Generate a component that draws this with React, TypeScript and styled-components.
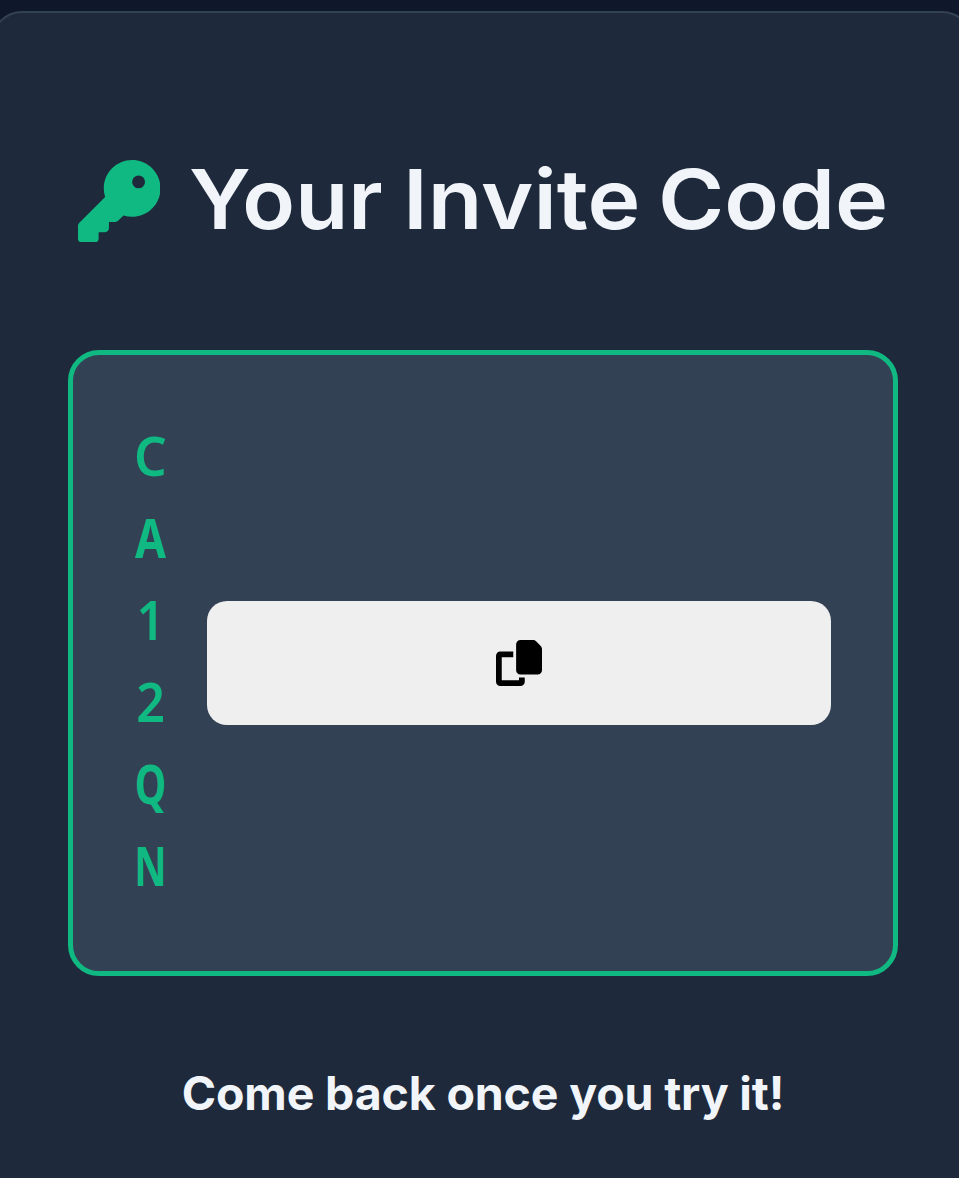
import React from 'react';
import styled, { createGlobalStyle } from 'styled-components';
import { FaKey } from 'react-icons/fa6';

const GlobalStyle = createGlobalStyle`
  * { box-sizing: border-box; }
  body {
    margin: 0;
    overflow-x: hidden;
    background: #0f172a;
    font-family: Inter, sans-serif;
  }
`;

const Page = styled.div`
  height: 1178px;
  padding-top: 11px;
  overflow: hidden;
`;

const Card = styled.main`
  margin: 0 -14px 0 -9px;
  height: 1167px;
  padding: 133px 68px 0 75px;
  background: #1e293b;
  border: 2px solid #334155;
  border-bottom: 0;
  border-radius: 31px 31px 0 0;
`;

const Title = styled.h1`
  display: flex;
  align-items: center;
  height: 110px;
  margin: 0;
  color: #f1f5f9;
  font-size: 83px;
  font-weight: 640;
  line-height: 110px;
  white-space: nowrap;
`;

const KeyIcon = styled(FaKey)`
  width: 82.5px;
  height: 82.5px;
  margin: 0 29.3px 0 9.6px;
  flex: none;
  color: #10b981;
`;

const Word = styled.span<{ $width: number; $stretch: number }>`
  flex: none;
  width: ${(p) => p.$width}px;
  margin-top: -4px;
  transform: scaleX(${(p) => p.$stretch});
  transform-origin: left center;
`;

const CodeBox = styled.section`
  display: flex;
  align-items: center;
  gap: 40px;
  width: 830px;
  height: 626px;
  margin-top: 94px;
  padding: 0 62px 0 61px;
  background: #334155;
  border: 5px solid #10b981;
  border-radius: 31px;
`;

const Code = styled.div`
  display: flex;
  flex-direction: column;
  width: 33px;
  margin-top: -7px;
  color: #10b981;
  font-family: 'Noto Sans', sans-serif;
  font-size: 54.6px;
  line-height: 82px;
`;

const Letter = styled.span<{ $scale: number; $weight: number }>`
  display: flex;
  justify-content: center;
  height: 82px;
  font-weight: ${(p) => p.$weight};
  transform: scaleX(${(p) => p.$scale});
`;

const CopyButton = styled.button`
  display: flex;
  flex: 1;
  align-items: center;
  justify-content: center;
  height: 124px;
  padding: 0;
  border: 0;
  border-radius: 20px;
  background: #efefef;
  color: #000;

  svg {
    width: 46px;
    height: 46px;
  }
`;

const Note = styled.p`
  margin: 82px 0 0;
  width: 830px;
  color: #f1f5f9;
  font-size: 46.5px;
  font-weight: 680;
  letter-spacing: -0.15px;
  line-height: 70px;
  text-align: center;
  white-space: nowrap;
`;

const letters = [
  { char: 'C', scale: 0.94, weight: 640 },
  { char: 'A', scale: 0.82, weight: 660 },
  { char: '1', scale: 0.9, weight: 640 },
  { char: '2', scale: 0.92, weight: 630 },
  { char: 'Q', scale: 0.73, weight: 680 },
  { char: 'N', scale: 0.73, weight: 690 },
];

function CopyIcon() {
  return (
    <svg viewBox="0 0 512 512" fill="currentColor" aria-hidden="true">
      <path d="M272 0h140.1c12.7 0 24.9 5.1 33.9 14.1l51.9 51.9c9 9 14.1 21.2 14.1 33.9V336c0 26.5-21.5 48-48 48H272c-26.5 0-48-21.5-48-48V48c0-26.5 21.5-48 48-48zM48 128h144v64H64v256h192v-32h64v48c0 26.5-21.5 48-48 48H48c-26.5 0-48-21.5-48-48V176c0-26.5 21.5-48 48-48z" />
    </svg>
  );
}

export default function App() {
  return (
    <>
      <GlobalStyle />
      <Page>
        <Card>
          <Title>
            <KeyIcon />
            <Word $width={213.5} $stretch={1.045}>Your</Word>
            <Word $width={255.5} $stretch={1.077}>Invite</Word>
            <Word $width={230} $stretch={1.083}>Code</Word>
          </Title>
          <CodeBox>
            <Code>
              {letters.map(({ char, scale, weight }) => (
                <Letter key={char} $scale={scale} $weight={weight}>{char}</Letter>
              ))}
            </Code>
            <CopyButton aria-label="Copy">
              <CopyIcon />
            </CopyButton>
          </CodeBox>
          <Note>Come back once you try it!</Note>
        </Card>
      </Page>
    </>
  );
}
